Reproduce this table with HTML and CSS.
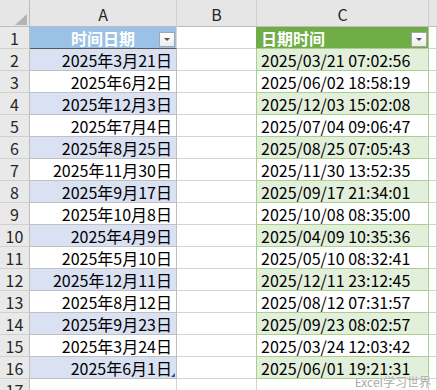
FILE: index.html
```html
<!DOCTYPE html>
<html lang="zh">
<head>
<meta charset="utf-8">
<title>Sheet</title>
<link rel="stylesheet" href="styles.css">
</head>
<body>
<div class="sheet">
  <div class="corner"><span class="tri"></span></div>
  <div class="colhead">A</div>
  <div class="colhead">B</div>
  <div class="colhead">C</div>
  <div class="colhead last"></div>

  <div class="rowhead">1</div>
  <div class="cell a-head">时间日期<span class="dd"></span></div>
  <div class="cell"></div>
  <div class="cell c-head">日期时间<span class="dd"></span></div>
  <div class="cell"></div>

  <div class="rowhead">2</div><div class="cell a band">2025年3月21日</div><div class="cell"></div><div class="cell c band">2025/03/21 07:02:56</div><div class="cell"></div>
  <div class="rowhead">3</div><div class="cell a">2025年6月2日</div><div class="cell"></div><div class="cell c">2025/06/02 18:58:19</div><div class="cell"></div>
  <div class="rowhead">4</div><div class="cell a band">2025年12月3日</div><div class="cell"></div><div class="cell c band">2025/12/03 15:02:08</div><div class="cell"></div>
  <div class="rowhead">5</div><div class="cell a">2025年7月4日</div><div class="cell"></div><div class="cell c">2025/07/04 09:06:47</div><div class="cell"></div>
  <div class="rowhead">6</div><div class="cell a band">2025年8月25日</div><div class="cell"></div><div class="cell c band">2025/08/25 07:05:43</div><div class="cell"></div>
  <div class="rowhead">7</div><div class="cell a">2025年11月30日</div><div class="cell"></div><div class="cell c">2025/11/30 13:52:35</div><div class="cell"></div>
  <div class="rowhead">8</div><div class="cell a band">2025年9月17日</div><div class="cell"></div><div class="cell c band">2025/09/17 21:34:01</div><div class="cell"></div>
  <div class="rowhead">9</div><div class="cell a">2025年10月8日</div><div class="cell"></div><div class="cell c">2025/10/08 08:35:00</div><div class="cell"></div>
  <div class="rowhead">10</div><div class="cell a band">2025年4月9日</div><div class="cell"></div><div class="cell c band">2025/04/09 10:35:36</div><div class="cell"></div>
  <div class="rowhead">11</div><div class="cell a">2025年5月10日</div><div class="cell"></div><div class="cell c">2025/05/10 08:32:41</div><div class="cell"></div>
  <div class="rowhead">12</div><div class="cell a band">2025年12月11日</div><div class="cell"></div><div class="cell c band">2025/12/11 23:12:45</div><div class="cell"></div>
  <div class="rowhead">13</div><div class="cell a">2025年8月12日</div><div class="cell"></div><div class="cell c">2025/08/12 07:31:57</div><div class="cell"></div>
  <div class="rowhead">14</div><div class="cell a band">2025年9月23日</div><div class="cell"></div><div class="cell c band">2025/09/23 08:02:57</div><div class="cell"></div>
  <div class="rowhead">15</div><div class="cell a">2025年3月24日</div><div class="cell"></div><div class="cell c">2025/03/24 12:03:42</div><div class="cell"></div>
  <div class="rowhead">16</div><div class="cell a band lastrow">2025年6月1日<span class="resize"></span></div><div class="cell"></div><div class="cell c band">2025/06/01 19:21:31</div><div class="cell"></div>
  <div class="rowhead">17</div><div class="cell"></div><div class="cell"></div><div class="cell"></div><div class="cell"></div>
</div>
<div class="watermark">Excel学习世界</div>
</body>
</html>
```
FILE: styles.css
```css
html, body {
  margin: 0;
  padding: 0;
  background: #ffffff;
  overflow: hidden;
  width: 437px;
  height: 390px;
}
body {
  position: relative;
  font-family: "Noto Sans CJK SC", "Noto Sans", sans-serif;
  font-size: 16px;
  color: #000;
}
.sheet {
  display: grid;
  grid-template-columns: 30px 147px 80px 172px 8px;
  grid-template-rows: 27px;
  grid-auto-rows: 22px;
}
.sheet > div {
  box-sizing: border-box;
}
.corner {
  background: #e6e6e6;
  border-right: 1px solid #bdbdbd;
  border-bottom: 1px solid #bdbdbd;
  position: relative;
}
.tri {
  position: absolute;
  left: 15px;
  top: 14px;
  width: 12px;
  height: 11px;
  background: #b4b4b4;
  clip-path: polygon(100% 0, 100% 100%, 0 100%);
}
.colhead {
  background: #e6e6e6;
  border-right: 1px solid #cfcfcf;
  border-bottom: 1px solid #bdbdbd;
  display: flex;
  align-items: center;
  justify-content: center;
  color: #262626;
  line-height: 1;
  padding-top: 2px;
}
.colhead.last { border-right: none; }
.rowhead {
  background: #e9e9e9;
  border-right: 1px solid #bdbdbd;
  border-bottom: 1px solid #d0d0d0;
  display: flex;
  align-items: center;
  justify-content: center;
  color: #262626;
  line-height: 1;
}
.cell {
  border-right: 1px solid #d4d4d4;
  border-bottom: 1px solid #d4d4d4;
  display: flex;
  align-items: center;
  line-height: 1;
  white-space: nowrap;
  position: relative;
}
.a {
  justify-content: flex-end;
  padding-right: 4px;
  border-bottom-color: #c0c0c0;
  border-right-color: #c0c0c0;
}
.a.band { background: #d9e1f2; }
.c {
  padding-left: 4px;
  border-left: 1px solid #a9d08e;
  border-right-color: #a9d08e;
  border-bottom-color: #a9d08e;
  margin-left: -1px;
}
.c.band { background: #e2efda; }
.a-head {
  background: #9bc2e6;
  color: #ffffff;
  font-weight: bold;
  justify-content: center;
  border-bottom-color: #5a5a5a;
}
.c-head {
  background: #70ad47;
  color: #ffffff;
  font-weight: bold;
  padding-left: 4px;
  border-left: 1px solid #70ad47;
  margin-left: -1px;
  border-right-color: #a9d08e;
  border-bottom-color: #a9d08e;
}
.dd {
  position: absolute;
  right: 1px;
  top: 5px;
  width: 16px;
  height: 15px;
  box-sizing: border-box;
  background: linear-gradient(#ffffff, #ececec);
  border: 1px solid #a6a6a6;
}
.dd::after {
  content: "";
  position: absolute;
  left: 4px;
  top: 5px;
  width: 0;
  height: 0;
  border-left: 3px solid transparent;
  border-right: 3px solid transparent;
  border-top: 3px solid #555;
}
.resize {
  position: absolute;
  right: 1px;
  bottom: 1px;
  width: 4px;
  height: 4px;
  background: #2f5597;
  clip-path: polygon(100% 0, 100% 100%, 0 100%);
}
.watermark {
  position: absolute;
  right: 6px;
  bottom: 2px;
  font-family: "Noto Sans CJK SC", "Noto Sans", sans-serif;
  font-size: 12px;
  color: #a8a8a8;
  text-shadow: 0 0 2px #ffffff, 0 0 1px #ffffff;
  line-height: 1;
}
```
